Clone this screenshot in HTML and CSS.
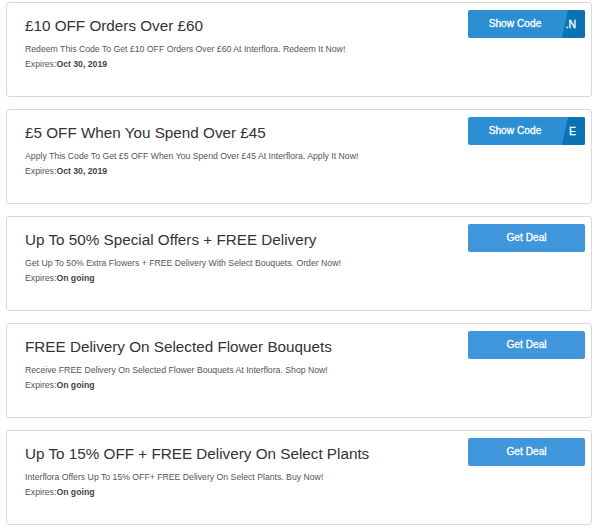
FILE: index.html
```html
<!DOCTYPE html>
<html>
<head>
<meta charset="utf-8">
<link rel="stylesheet" href="styles.css">
</head>
<body>
<div class="list">
  <div class="card">
    <div class="info">
      <h2 class="title">£10 OFF Orders Over £60</h2>
      <p class="desc">Redeem This Code To Get £10 OFF Orders Over £60 At Interflora. Redeem It Now!</p>
      <p class="exp">Expires:<b>Oct 30, 2019</b></p>
    </div>
    <a class="btn code"><span class="label">Show Code</span><span class="peel">.N</span></a>
  </div>
  <div class="card">
    <div class="info">
      <h2 class="title">£5 OFF When You Spend Over £45</h2>
      <p class="desc">Apply This Code To Get £5 OFF When You Spend Over £45 At Interflora. Apply It Now!</p>
      <p class="exp">Expires:<b>Oct 30, 2019</b></p>
    </div>
    <a class="btn code"><span class="label">Show Code</span><span class="peel">E</span></a>
  </div>
  <div class="card">
    <div class="info">
      <h2 class="title">Up To 50% Special Offers + FREE Delivery</h2>
      <p class="desc">Get Up To 50% Extra Flowers + FREE Delivery With Select Bouquets. Order Now!</p>
      <p class="exp">Expires:<b>On going</b></p>
    </div>
    <a class="btn deal">Get Deal</a>
  </div>
  <div class="card">
    <div class="info">
      <h2 class="title">FREE Delivery On Selected Flower Bouquets</h2>
      <p class="desc">Receive FREE Delivery On Selected Flower Bouquets At Interflora. Shop Now!</p>
      <p class="exp">Expires:<b>On going</b></p>
    </div>
    <a class="btn deal">Get Deal</a>
  </div>
  <div class="card">
    <div class="info">
      <h2 class="title">Up To 15% OFF + FREE Delivery On Select Plants</h2>
      <p class="desc">Interflora Offers Up To 15% OFF+ FREE Delivery On Select Plants. Buy Now!</p>
      <p class="exp">Expires:<b>On going</b></p>
    </div>
    <a class="btn deal">Get Deal</a>
  </div>
</div>
</body>
</html>
```

FILE: styles.css
```css
html, body {
  margin: 0;
  padding: 0;
  background: #fff;
}
body {
  font-family: "Liberation Sans", Arial, sans-serif;
  padding: 2px 0 0 6px;
}
.list {
  width: 586px;
  display: flex;
  flex-direction: column;
  gap: 12px;
}
.card {
  box-sizing: border-box;
  height: 95px;
  border: 1px solid #d9d9d9;
  border-radius: 3px;
  display: flex;
  justify-content: space-between;
  align-items: flex-start;
  padding: 7px 6px 0 18px;
}
.info {
  padding-top: 7px;
}
.title {
  margin: 0;
  font-size: 15.25px;
  line-height: 18px;
  font-weight: normal;
  color: #333;
}
.desc {
  margin: 7px 0 0;
  font-size: 8.7px;
  line-height: 14px;
  color: #555;
}
.exp {
  margin: 1px 0 0;
  font-size: 8.7px;
  line-height: 14px;
  color: #555;
}
.exp b {
  color: #444;
}
.btn {
  position: relative;
  box-sizing: border-box;
  width: 117px;
  height: 28px;
  border-radius: 2px;
  color: #fff;
  font-size: 10.2px;
  font-weight: normal;
  -webkit-text-stroke: 0.3px #fff;
  line-height: 28px;
  text-align: center;
  overflow: hidden;
}
.deal {
  background: #3f96db;
}
.code {
  background: #2d8fd3;
  display: flex;
}
.code .label {
  width: 94px;
}
.peel {
  position: absolute;
  top: 0;
  right: 0;
  bottom: 0;
  width: 23px;
  background: #0b72b3;
  clip-path: polygon(6px 0, 100% 0, 100% 100%, 0 100%);
  text-align: right;
  padding-right: 9px;
  box-sizing: border-box;
  font-size: 10.5px;
}
```
